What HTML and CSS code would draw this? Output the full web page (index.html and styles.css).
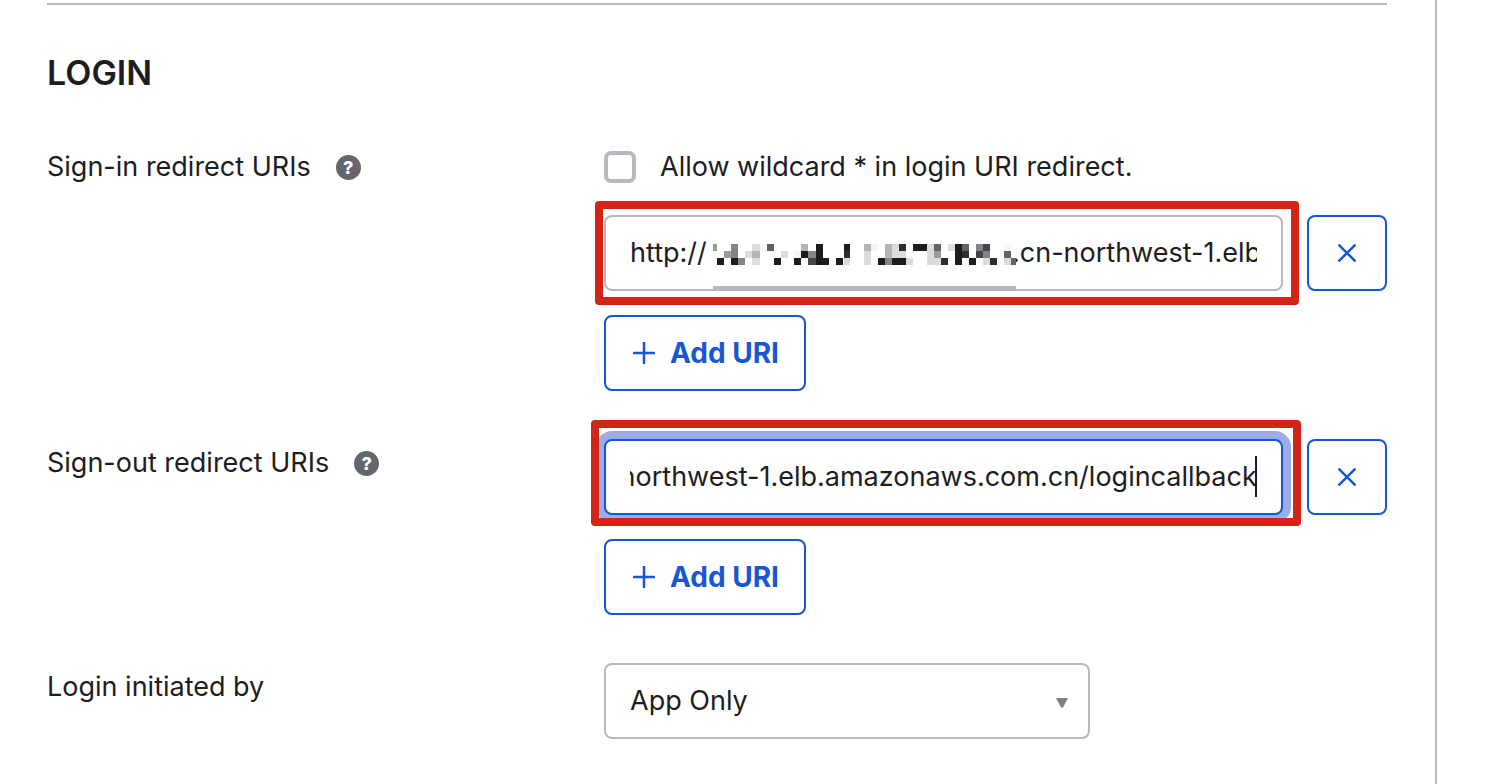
FILE: index.html
```html
<!DOCTYPE html>
<html lang="en">
<head>
<meta charset="utf-8">
<meta name="viewport" content="width=device-width, initial-scale=1">
<title>Login settings</title>
<link rel="stylesheet" href="styles.css">
</head>
<body>
<main class="panel">
  <hr class="divider">
  <form class="section">
    <h2 class="section-title">LOGIN</h2>

    <div class="row">
      <div class="row-label">
        <label for="signin-uri">Sign-in redirect URIs</label>
        <button class="help" type="button" aria-label="Help on sign-in redirect URIs">?</button>
      </div>
      <div class="row-body">
        <label class="check"><input type="checkbox"><span>Allow wildcard * in login URI redirect.</span></label>
        <div class="uri">
          <div class="field">
            <span class="scheme">http://</span>
            <span class="redacted">
              <svg width="303" height="21" viewBox="0 0 303 21" shape-rendering="crispEdges" aria-hidden="true">
                <path fill="#1c1c1f" d="M4 14h7v7h-7zM18 14h7v7h-7zM61 14h7v7h-7zM81 14h7v7h-7zM88 7h7v7h-7zM103 0h7v21h-7zM110 14h6v7h-6zM123 14h7v7h-7zM131 0h6v7h-6zM165 14h7v7h-7zM179 14h14v7h-14zM200 0h14v7h-14zM242 0h7v21h-7zM256 14h7v7h-7z"/>
                <path fill="#2d2d32" d="M131 7h6v7h-6zM186 0h7v7h-7zM228 14h7v7h-7zM249 7h7v7h-7zM277 14h7v7h-7z"/>
                <path fill="#454549" d="M95 14h8v7h-8zM263 7h7v7h-7zM270 0h7v7h-7z"/>
                <path fill="#636366" d="M54 0h7v7h-7zM221 0h7v7h-7zM249 0h7v7h-7zM291 7h7v7h-7zM298 14h5v7h-5z"/>
                <path fill="#848486" d="M18 0h7v14h-7zM25 14h7v7h-7zM95 7h8v7h-8zM172 14h7v7h-7zM263 0h7v7h-7zM270 7h7v7h-7z"/>
                <path fill="#9b9b9d" d="M0 0h4v7h-4zM11 7h7v7h-7zM221 7h7v7h-7z"/>
                <path fill="#b4b4b6" d="M39 7h8v7h-8zM151 0h7v7h-7zM172 0h7v14h-7zM88 0h7v7h-7z"/>
                <path fill="#dcdcdd" d="M32 7h7v7h-7zM39 0h8v7h-8zM39 14h8v7h-8zM68 7h7v7h-7zM131 14h6v7h-6zM151 7h7v14h-7zM179 0h7v14h-7zM186 7h7v7h-7zM193 14h7v7h-7zM214 0h7v21h-7zM221 14h7v7h-7zM235 0h7v7h-7zM270 14h7v7h-7zM291 14h7v7h-7z"/>
                <path fill="#f7f7f7" d="M47 0h7v7h-7zM81 7h7v7h-7zM158 0h7v7h-7zM291 0h7v7h-7z"/>
              </svg>
            </span>
            <input class="field-input field-input-tail" id="signin-uri" type="text" value=".cn-northwest-1.elb.amazonaws.com.cn/logincallback" spellcheck="false">
            <span class="highlight highlight-signin"></span>
          </div>
          <button class="remove" type="button" aria-label="Remove sign-in URI">
            <svg width="18" height="18" viewBox="0 0 18 18" aria-hidden="true"><path d="M1.3 1.3L16.7 16.7M16.7 1.3L1.3 16.7"/></svg>
          </button>
        </div>
        <button class="add" type="button">
          <svg width="22" height="22" viewBox="0 0 22 22" aria-hidden="true"><path d="M11 0.5V21.5M0.5 11H21.5"/></svg>
          <span>Add URI</span>
        </button>
      </div>
    </div>

    <div class="row">
      <div class="row-label">
        <label for="signout-uri">Sign-out redirect URIs</label>
        <button class="help" type="button" aria-label="Help on sign-out redirect URIs">?</button>
      </div>
      <div class="row-body">
        <div class="uri">
          <div class="field field-active">
            <input class="field-input" id="signout-uri" type="text" value=".cn-northwest-1.elb.amazonaws.com.cn/logincallback" spellcheck="false">
            <span class="caret"></span>
            <span class="highlight highlight-signout"></span>
          </div>
          <button class="remove" type="button" aria-label="Remove sign-out URI">
            <svg width="18" height="18" viewBox="0 0 18 18" aria-hidden="true"><path d="M1.3 1.3L16.7 16.7M16.7 1.3L1.3 16.7"/></svg>
          </button>
        </div>
        <button class="add" type="button">
          <svg width="22" height="22" viewBox="0 0 22 22" aria-hidden="true"><path d="M11 0.5V21.5M0.5 11H21.5"/></svg>
          <span>Add URI</span>
        </button>
      </div>
    </div>

    <div class="row">
      <div class="row-label"><label for="initiated-by">Login initiated by</label></div>
      <div class="row-body">
        <div class="select">
          <select id="initiated-by"><option>App Only</option></select>
          <svg class="select-arrow" width="12" height="10" viewBox="0 0 12 10" aria-hidden="true"><path d="M0 0H12L7 9.5H5Z"/></svg>
        </div>
      </div>
    </div>
  </form>
</main>
<script src="script.js"></script>
</body>
</html>
```

FILE: styles.css
```css
* {
  box-sizing: border-box;
}

body {
  margin: 0;
  background: #fff;
  color: #1d1d21;
  font-family: Inter, "Liberation Sans", sans-serif;
  font-size: 27px;
  line-height: 48px;
}

button,
input,
select {
  margin: 0;
  font: inherit;
  color: inherit;
}

.panel {
  min-height: 100vh;
  margin-right: 73px;
  padding: 3px 48px 45px 47px;
  border-right: 2px solid #b8b8bf;
}

.divider {
  height: 2px;
  margin: 0;
  border: 0;
  background: #b8b8bf;
}

.section {
  display: flex;
  flex-direction: column;
  gap: 48px;
  padding-top: 44px;
}

.section-title {
  margin: 0 0 -2px;
  font-size: 34px;
  font-weight: 600;
}

.row {
  display: flex;
}

.row-label {
  display: flex;
  flex: 0 0 557px;
  align-items: center;
  align-self: flex-start;
  gap: 25px;
}

.row-body {
  display: flex;
  flex: 1;
  flex-direction: column;
  align-items: flex-start;
  gap: 24px;
  min-width: 0;
}

.help {
  width: 25px;
  height: 25px;
  padding: 0;
  border: 0;
  border-radius: 50%;
  background: #65656d;
  color: #fff;
  font-size: 18px;
  font-weight: 800;
  line-height: 25px;
}

.check {
  display: flex;
  align-items: center;
  gap: 24px;
}

.check input {
  width: 32px;
  height: 32px;
  border: 4px solid #b8b8bf;
  border-radius: 7px;
  background: #fff;
  appearance: none;
}

.uri {
  display: flex;
  gap: 24px;
  width: 100%;
}

.field {
  position: relative;
  display: flex;
  flex: 1;
  align-items: center;
  height: 76px;
  min-width: 0;
  padding: 0 24px;
  border: 2px solid #b8b8bf;
  border-radius: 8px;
  background: #fff;
}

.field-active {
  border-color: #1757d3;
  box-shadow: 0 0 0 8px #9eabe6;
}

.field-input {
  flex: 1;
  width: 0;
  min-width: 0;
  height: 48px;
  padding: 0;
  border: 0;
  outline: 0;
  background: transparent;
}

.field-input-tail {
  margin-left: -4px;
}

.scheme {
  flex: 0 0 83px;
}

.redacted {
  position: relative;
  display: flex;
  align-items: center;
  height: 72px;
  padding-top: 3px;
}

.redacted::after {
  position: absolute;
  right: 0;
  bottom: -2px;
  left: 0;
  height: 5px;
  background: #b8b8bf;
  content: "";
}

.caret {
  position: absolute;
  top: 15px;
  right: 24px;
  width: 2px;
  height: 41px;
  background: #1d1d21;
}

.highlight {
  position: absolute;
  border: 8px solid #d32418;
  border-radius: 4px;
  pointer-events: none;
}

.highlight-signin {
  inset: -16px -18px -16px -11px;
}

.highlight-signout {
  inset: -21px -20px -13px -15px;
}

.remove,
.add {
  display: flex;
  align-items: center;
  justify-content: center;
  height: 76px;
  border: 2px solid #1757d3;
  border-radius: 8px;
  background: #fff;
  color: #1757d3;
}

.remove {
  width: 80px;
  padding: 0;
}

.remove svg,
.add svg {
  fill: none;
  stroke: currentColor;
  stroke-width: 2.5;
  stroke-linecap: round;
}

.add {
  gap: 15px;
  padding: 0 25px 0 27px;
  font-size: 28px;
  font-weight: 700;
}

.select {
  position: relative;
  width: 486px;
  max-width: 100%;
}

.select select {
  display: block;
  width: 100%;
  height: 76px;
  padding: 0 48px 0 24px;
  border: 2px solid #b8b8bf;
  border-radius: 8px;
  background: #fff;
  appearance: none;
}

.select-arrow {
  position: absolute;
  top: 35px;
  right: 22px;
  fill: #808080;
  pointer-events: none;
}
```

FILE: script.js
```js
// Show the end of the URI being edited.
const signout = document.getElementById("signout-uri");
signout.scrollLeft = signout.scrollWidth;
```
